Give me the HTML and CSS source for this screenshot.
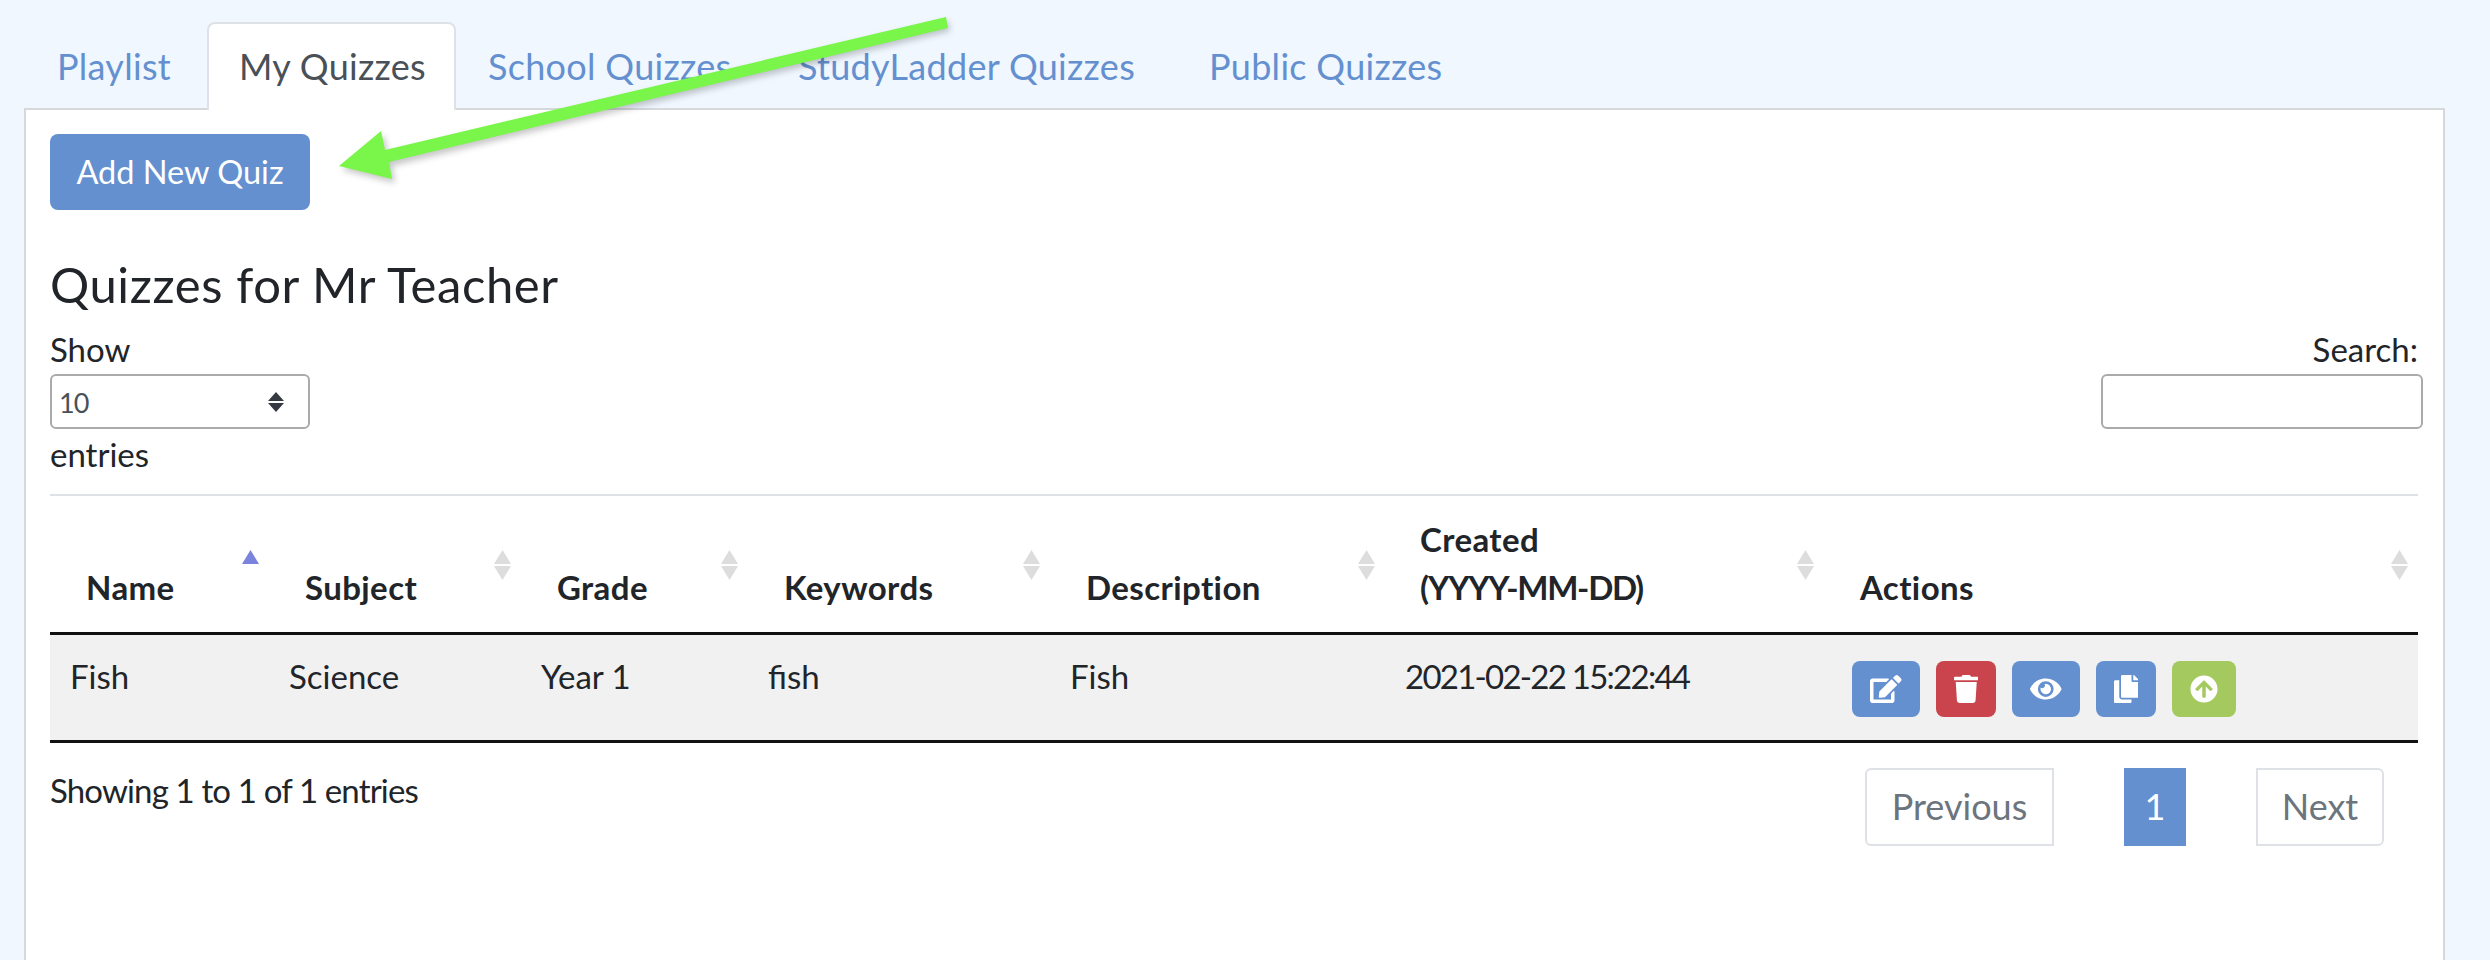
FILE: index.html
```html
<!DOCTYPE html>
<html lang="en">
<head>
<meta charset="utf-8">
<title>My Quizzes</title>
<link rel="stylesheet" href="styles.css">
</head>
<body>
<nav class="tabs">
  <a class="tab tab-playlist">Playlist</a>
  <a class="tab tab-active">My Quizzes</a>
  <a class="tab tab-school">School Quizzes</a>
  <a class="tab tab-ladder">StudyLadder Quizzes</a>
  <a class="tab">Public Quizzes</a>
</nav>
<main class="panel">
  <button class="add-btn">Add New Quiz</button>
  <h2 class="title">Quizzes for Mr Teacher</h2>
  <div class="controls">
    <div class="length">
      <div class="ctl-label">Show</div>
      <div class="select-box">
        <select class="select"><option>10</option></select>
        <svg class="select-arrows" viewBox="0 0 16 20"><path d="M8 0l8 9H0zM0 11h16l-8 9z"/></svg>
      </div>
      <div class="ctl-label">entries</div>
    </div>
    <div class="search">
      <div class="ctl-label">Search:</div>
      <input class="search-input" type="text">
    </div>
  </div>
  <table class="data">
    <colgroup>
      <col class="c1"><col class="c2"><col class="c3"><col class="c4"><col class="c5"><col class="c6"><col class="c7">
    </colgroup>
    <thead>
      <tr>
        <th>Name<span class="sort sort-asc"></span></th>
        <th>Subject<span class="sort"></span></th>
        <th>Grade<span class="sort"></span></th>
        <th>Keywords<span class="sort"></span></th>
        <th>Description<span class="sort"></span></th>
        <th class="th-created">Created<br><span class="date-format">(YYYY-MM-DD)</span><span class="sort"></span></th>
        <th class="th-actions">Actions<span class="sort"></span></th>
      </tr>
    </thead>
    <tbody>
      <tr>
        <td>Fish</td>
        <td>Science</td>
        <td>Year 1</td>
        <td>fish</td>
        <td>Fish</td>
        <td class="date">2021-02-22 15:22:44</td>
        <td class="actions">
          <div class="action-row">
            <span class="act act-blue act-wide"><svg class="ico" viewBox="0 0 576 512"><path d="M402.6 83.2l90.2 90.2c3.8 3.8 3.8 10 0 13.8L274.4 405.6l-92.8 10.3c-12.4 1.4-22.9-9.1-21.5-21.5l10.3-92.8L388.8 83.2c3.8-3.8 10-3.8 13.8 0zm162-22.9l-48.8-48.8c-15.2-15.2-39.9-15.2-55.2 0l-35.4 35.4c-3.8 3.8-3.8 10 0 13.8l90.2 90.2c3.8 3.8 10 3.8 13.8 0l35.4-35.4c15.2-15.3 15.2-40 0-55.2zM384 346.2V448H64V128h229.8c3.2 0 6.2-1.3 8.5-3.5l40-40c7.6-7.6 2.2-20.5-8.5-20.5H48C21.5 64 0 85.5 0 112v352c0 26.5 21.5 48 48 48h352c26.5 0 48-21.5 48-48V306.2c0-10.7-12.9-16-20.5-8.5l-40 40c-2.2 2.3-3.5 5.3-3.5 8.5z"/></svg></span>
            <span class="act act-red"><svg class="ico" viewBox="0 0 448 512"><path d="M432 32H312l-9.4-18.7A24 24 0 0 0 281.1 0H166.8a23.72 23.72 0 0 0-21.4 13.3L136 32H16A16 16 0 0 0 0 48v32a16 16 0 0 0 16 16h416a16 16 0 0 0 16-16V48a16 16 0 0 0-16-16zM53.2 467a48 48 0 0 0 47.9 45h245.8a48 48 0 0 0 47.9-45L416 128H32z"/></svg></span>
            <span class="act act-blue act-wide"><svg class="ico" viewBox="0 0 576 512"><path d="M572.52 241.4C518.29 135.59 410.93 64 288 64S57.68 135.64 3.48 241.41a32.35 32.35 0 0 0 0 29.19C57.71 376.41 165.07 448 288 448s230.32-71.64 284.52-177.41a32.35 32.35 0 0 0 0-29.19zM288 400a144 144 0 1 1 144-144 143.93 143.93 0 0 1-144 144zm0-240a95.31 95.31 0 0 0-25.31 3.79 47.85 47.85 0 0 1-66.9 66.9A95.78 95.78 0 1 0 288 160z"/></svg></span>
            <span class="act act-blue"><svg class="ico" viewBox="0 0 448 512"><path d="M320 448v40c0 13.255-10.745 24-24 24H24c-13.255 0-24-10.745-24-24V120c0-13.255 10.745-24 24-24h72v296c0 30.879 25.121 56 56 56h168zm0-344V0H152c-13.255 0-24 10.745-24 24v368c0 13.255 10.745 24 24 24h272c13.255 0 24-10.745 24-24V128H344c-13.2 0-24-10.8-24-24zm120.971-31.029L375.029 7.029A24 24 0 0 0 358.059 0H352v96h96v-6.059a24 24 0 0 0-7.029-16.97z"/></svg></span>
            <span class="act act-green"><svg class="ico" viewBox="0 0 512 512"><path d="M8 256C8 119 119 8 256 8s248 111 248 248-111 248-248 248S8 393 8 256zm143.6 28.9l72.4-75.5V392c0 13.3 10.7 24 24 24h16c13.3 0 24-10.7 24-24V209.4l72.4 75.5c9.3 9.7 24.8 9.9 34.3.4l10.9-11c9.4-9.4 9.4-24.6 0-33.9L273 107.7c-9.4-9.4-24.6-9.4-33.9 0L106.3 240.4c-9.4 9.4-9.4 24.6 0 33.9l10.9 11c9.6 9.5 25.1 9.3 34.4-.4z"/></svg></span>
          </div>
        </td>
      </tr>
    </tbody>
  </table>
  <div class="footer">
    <div class="info">Showing 1 to 1 of 1 entries</div>
    <div class="pager">
      <a class="page page-prev">Previous</a>
      <a class="page page-current">1</a>
      <a class="page page-next">Next</a>
    </div>
  </div>
</main>
<svg class="callout" viewBox="0 0 1000 200" width="1000" height="200">
  <polygon class="callout-shadow" points="948,21 950,31 392,166 395,183 342,170 384,135 388,154"/>
  <polygon class="callout-arrow" points="946,17 948,28 389,162 392,179 339,166 381,131 385,150"/>
</svg>
</body>
</html>
```
FILE: styles.css
```css
* { box-sizing: border-box; }
html, body { margin: 0; height: 100%; }
body {
  background: #f0f7fe;
  color: #212529;
  font-family: "Lato", "Noto Sans", sans-serif;
  font-size: 33px;
  line-height: 48px;
  overflow: hidden;
  position: relative;
}
.tabs {
  display: flex;
  height: 110px;
  padding: 22px 0 0 25px;
  position: relative;
  z-index: 1;
}
.tab {
  height: 88px;
  padding: 18px 30px 0;
  color: #6490d0;
  font-size: 36px;
  letter-spacing: 0.3px;
  white-space: nowrap;
  border: 2px solid transparent;
  border-bottom: 0;
  border-radius: 8px 8px 0 0;
}
.tab-playlist { width: 182px; }
.tab-active {
  width: 249px;
  background: #fff;
  color: #495057;
  border-color: #dee2e6;
}
.tab-school { width: 310px; }
.tab-ladder { width: 411px; }
.panel {
  margin: -2px 45px 0 24px;
  height: 860px;
  background: #fff;
  border: 2px solid #d6d9dc;
  padding: 24px 24px 0;
}
.add-btn {
  display: block;
  width: 260px;
  height: 76px;
  border: 0;
  border-radius: 8px;
  background: #6490d0;
  color: #fff;
  font: inherit;
  font-size: 32.5px;
}
.title {
  margin: 45px 0 13px;
  font-size: 49px;
  line-height: 58px;
  font-weight: 400;
  letter-spacing: 0.6px;
}
.controls {
  display: flex;
  justify-content: space-between;
  width: 2373px;
  height: 168px;
}
.ctl-label { height: 48px; line-height: 46px; }
.length .select-box + .ctl-label { margin-top: 2px; }
.select-box { position: relative; width: 260px; height: 55px; }
.select {
  appearance: none;
  width: 100%;
  height: 100%;
  padding: 3px 0 0 7px;
  background: #fff;
  border: 2px solid #aaa;
  border-radius: 6px;
  color: #495057;
  font: inherit;
  font-size: 27px;
  letter-spacing: -1px;
}
.select-arrows {
  position: absolute;
  right: 26px;
  top: 18px;
  width: 16px;
  height: 20px;
  fill: #343a40;
}
.search { display: flex; flex-direction: column; align-items: flex-end; }
.search .ctl-label { padding-right: 5px; }
.search-input {
  width: 322px;
  height: 55px;
  border: 2px solid #aaa;
  border-radius: 6px;
  background: #fff;
}
.data {
  width: 2368px;
  table-layout: fixed;
  border-collapse: collapse;
  border-top: 2px solid #dee2e6;
}
.c1 { width: 219px; }
.c2 { width: 252px; }
.c3 { width: 227px; }
.c4 { width: 302px; }
.c5 { width: 335px; }
.c6 { width: 447px; }
.c7 { width: 586px; }
.data th {
  position: relative;
  height: 136px;
  padding: 19px 20px 21px 36px;
  vertical-align: bottom;
  text-align: left;
  font-weight: 700;
  letter-spacing: 0.4px;
  border-bottom: 3px solid #111;
}
.data th.th-actions { padding-left: 28px; }
.data th.th-created { padding-left: 35px; }
.date-format { letter-spacing: -1.3px; }
.sort {
  position: absolute;
  right: 10px;
  top: 54px;
  width: 17px;
  height: 30px;
}
.th-created .sort { right: 18px; }
.sort::before,
.sort::after {
  content: "";
  position: absolute;
  left: 0;
  width: 17px;
  height: 14px;
  background: #ddd;
}
.sort::before { top: 0; clip-path: polygon(50% 0, 100% 100%, 0 100%); }
.sort::after { bottom: 0; clip-path: polygon(0 0, 100% 0, 50% 100%); }
.sort-asc::before { background: #7b84dd; }
.sort-asc::after { display: none; }
.data td {
  height: 108px;
  padding: 17px 20px 0;
  vertical-align: top;
  background: #f1f1f1;
  border-bottom: 3px solid #111;
}
.data td.date { letter-spacing: -1.75px; }
.data td.actions { padding-top: 26px; }
.action-row { display: flex; gap: 16px; }
.act {
  display: flex;
  align-items: center;
  justify-content: center;
  width: 60px;
  height: 56px;
  border-radius: 8px;
}
.act-wide { width: 68px; }
.act-blue { background: #6490d0; }
.act-red { background: #c9444d; }
.act-green { background: #a4c95f; width: 64px; }
.ico { height: 28px; fill: #fff; display: block; }
.footer {
  display: flex;
  justify-content: space-between;
  width: 2368px;
  padding: 25px 34px 0 0;
}
.info { letter-spacing: -0.85px; line-height: 45px; }
.pager { display: flex; }
.page {
  height: 78px;
  padding-top: 12px;
  font-size: 36px;
  color: #6c757d;
  text-align: center;
  border: 2px solid #dee2e6;
}
.page-prev { width: 189px; border-radius: 6px 0 0 6px; }
.page-current {
  width: 62px;
  margin: 0 70px;
  background: #6490d0;
  border-color: #6490d0;
  color: #fff;
}
.page-next { width: 128px; border-radius: 0 6px 6px 0; }
.callout {
  position: absolute;
  left: 0;
  top: 0;
  z-index: 2;
}
.callout-arrow { fill: #7af54a; }
.callout-shadow { fill: rgba(0, 0, 0, 0.22); filter: blur(3px); }
```
